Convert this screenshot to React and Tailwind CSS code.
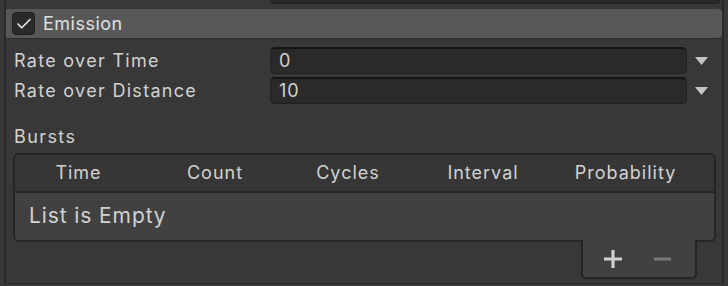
import { Check } from "lucide-react"

const rows = [
  { label: "Rate over Time", value: "0" },
  { label: "Rate over Distance", value: "10" },
]

const columns = [
  { name: "Time", w: "w-[127px]" },
  { name: "Count", w: "w-[146px]" },
  { name: "Cycles", w: "w-[120px]" },
  { name: "Interval", w: "w-[150px]" },
  { name: "Probability", w: "w-[135px]" },
]

function Arrow() {
  return (
    <svg width="13" height="8" viewBox="0 0 13 8" className="shrink-0">
      <path d="M0 0 H13 L6.5 8 Z" fill="#c4c4c4" />
    </svg>
  )
}

export default function App() {
  return (
    <div
      className="w-[728px] h-[286px] overflow-hidden bg-[#383838] text-[#d2d2d2] pl-[4px]"
      style={{ fontFamily: "Inter, 'Liberation Sans', sans-serif" }}
    >
      <div className="h-[284px] border-l-2 border-r-2 border-b border-[#2a2a2a] w-[720px] flex flex-col">
        {/* previous field, cut off at top */}
        <div className="flex h-[4px]">
          <div className="ml-[264px] w-[450px] h-[4px] bg-[#2a2a2a] rounded-b-[5px] border-b border-[#212121]" />
        </div>

        {/* Module header */}
        <div className="mt-[5px] h-[30px] bg-[#585858] rounded-r-[4px] border-b border-[#2e2e2e] flex items-center pl-[6px]">
          <div className="w-[23px] h-[23px] rounded-[4px] bg-[#2a2a2a] border border-[#212121] flex items-center justify-center">
            <Check size={18} strokeWidth={2.2} color="#e4e4e4" />
          </div>
          <span className="ml-[8px] text-[18px] leading-none tracking-[0.5px] text-[#e0e0e0]">Emission</span>
        </div>

        {/* Rate rows */}
        <div className="mt-[8px] flex flex-col gap-[3px]">
          {rows.map((r) => (
            <div key={r.label} className="flex items-center h-[27px]">
              <span className="pl-[8px] w-[264px] text-[18px] leading-none tracking-[1.3px]">{r.label}</span>
              <div className="w-[417px] h-[27px] rounded-[5px] bg-[#2a2a2a] border border-[#212121] border-t-[#151515] border-t-2 flex items-center pl-[8px] text-[18px] leading-none tracking-[1px]">
                {r.value}
              </div>
              <div className="ml-[8px]">
                <Arrow />
              </div>
            </div>
          ))}
        </div>

        {/* Bursts */}
        <div className="mt-[24px] pl-[8px] text-[18px] leading-none tracking-[1.4px]">Bursts</div>

        <div className="mt-[7px] ml-[7px] w-[703px]">
          <div className="rounded-[6px] border-2 border-[#252525] overflow-hidden">
            <div className="h-[38px] bg-[#363636] border-b-2 border-[#252525] flex items-center text-[18px] leading-none tracking-[1px]">
              {columns.map((c) => (
                <div key={c.name} className={`${c.w} text-center`}>
                  {c.name}
                </div>
              ))}
            </div>
            <div className="h-[47px] bg-[#414141] flex items-center pl-[14px] pb-[2px] text-[21px] leading-none tracking-[0.9px]">
              List is Empty
            </div>
          </div>
          <div className="flex justify-end pr-[19px]">
            <div className="-mt-[2px] w-[116px] h-[39px] bg-[#414141] border-2 border-t-0 border-[#252525] rounded-b-[5px] flex items-center pl-[20px] gap-[31px]">
              <svg width="20" height="20" viewBox="0 0 20 20">
                <path d="M10 1v18M1 10h18" stroke="#d0d0d0" strokeWidth="3.2" />
              </svg>
              <svg width="17" height="20" viewBox="0 0 17 20">
                <path d="M1 10h15" stroke="#7a7a7a" strokeWidth="3.2" strokeLinecap="round" />
              </svg>
            </div>
          </div>
        </div>
      </div>
    </div>
  )
}
